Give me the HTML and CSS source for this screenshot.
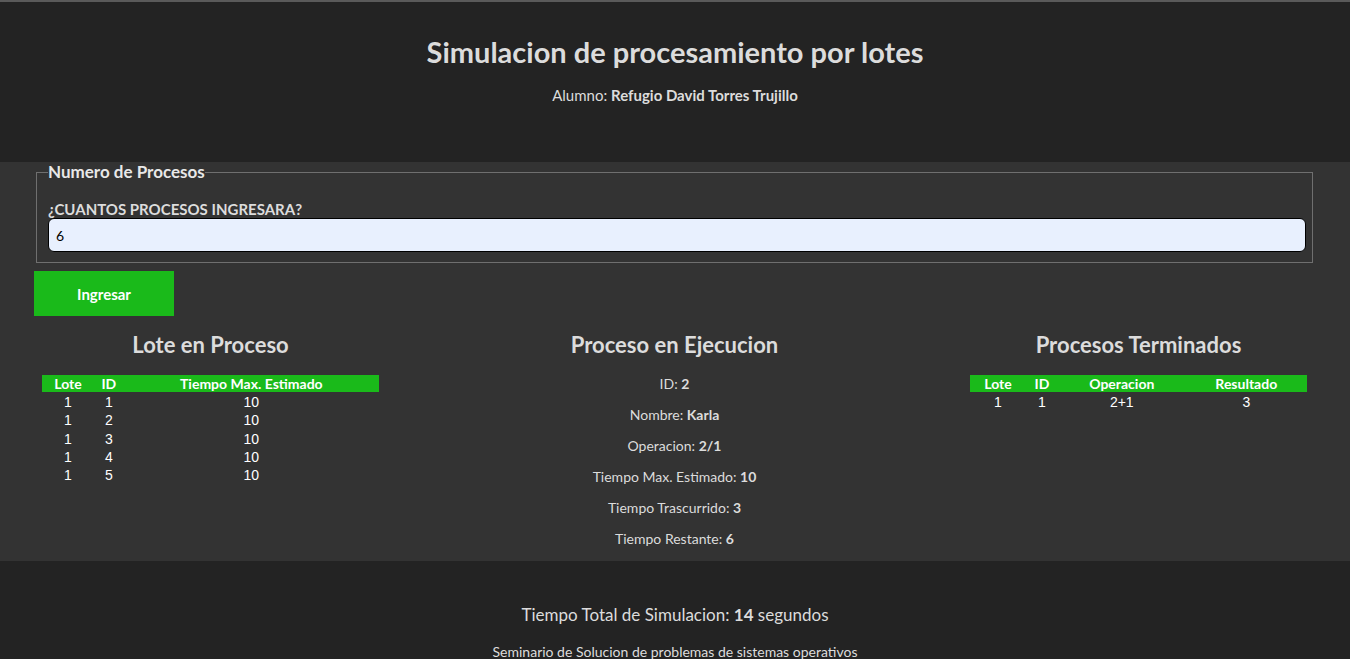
FILE: index.html
```html
<!DOCTYPE html>
<html lang="es">
<head>
    <meta charset="UTF-8">
    <meta name="viewport" content="width=device-width, initial-scale=1.0">
    <title>Procesamiento por lotes</title>
    <link rel="stylesheet" href="styles.css">
</head>
<body>
<header class="top">
    <h1>Simulacion de procesamiento por lotes</h1>
    <p>Alumno: <b>Refugio David Torres Trujillo</b></p>
</header>

<main class="panel">
    <form id="procForm" class="proc-form">
        <fieldset>
            <legend>Numero de Procesos</legend>
            <label for="numProcesos">¿Cuantos procesos ingresara?</label>
            <input type="text" id="numProcesos" value="6">
        </fieldset>
        <button type="button" class="btn">Ingresar</button>
    </form>

    <div class="columns">
        <section class="col">
            <h2>Lote en Proceso</h2>
            <table class="tabla">
                <thead>
                    <tr><th>Lote</th><th>ID</th><th>Tiempo Max. Estimado</th></tr>
                </thead>
                <tbody>
                    <tr><td>1</td><td>1</td><td>10</td></tr>
                    <tr><td>1</td><td>2</td><td>10</td></tr>
                    <tr><td>1</td><td>3</td><td>10</td></tr>
                    <tr><td>1</td><td>4</td><td>10</td></tr>
                    <tr><td>1</td><td>5</td><td>10</td></tr>
                </tbody>
            </table>
        </section>

        <section class="col">
            <h2>Proceso en Ejecucion</h2>
            <p>ID: <b>2</b></p>
            <p>Nombre: <b>Karla</b></p>
            <p>Operacion: <b>2/1</b></p>
            <p>Tiempo Max. Estimado: <b>10</b></p>
            <p>Tiempo Trascurrido: <b>3</b></p>
            <p>Tiempo Restante: <b>6</b></p>
        </section>

        <section class="col">
            <h2>Procesos Terminados</h2>
            <table class="tabla">
                <thead>
                    <tr><th>Lote</th><th>ID</th><th>Operacion</th><th>Resultado</th></tr>
                </thead>
                <tbody>
                    <tr><td>1</td><td>1</td><td>2+1</td><td>3</td></tr>
                </tbody>
            </table>
        </section>
    </div>
</main>

<footer class="bottom">
    <p class="total">Tiempo Total de Simulacion: <b>14</b> segundos</p>
    <p>Seminario de Solucion de problemas de sistemas operativos</p>
</footer>
</body>
</html>
```

FILE: styles.css
```css
body {
    margin: 0;
    font-family: Lato, "Open Sans", sans-serif;
    font-size: 14px;
    color: #dcdcdc;
    background-color: #232323;
    border-top: 2px solid #5a5a5a;
}

.top {
    background-color: #232323;
    text-align: center;
    padding: 33px 0 58px;
}

.top h1 {
    margin: 0 0 17px;
    font-size: 29px;
    line-height: 34px;
}

.top p {
    margin: 0;
    font-size: 15px;
    line-height: 18px;
}

.panel {
    background-color: #333333;
}

.proc-form {
    padding: 0 35px 0 34px;
}

fieldset {
    margin: 0 2px;
    padding: 8px 6px 10px 11px;
    border: 1px solid #6f6f6f;
}

legend {
    font-size: 17px;
    font-weight: bold;
    color: #e8e8e8;
    padding: 0;
    line-height: 20px;
}

label {
    display: block;
    font-size: 15px;
    font-weight: bold;
    text-transform: uppercase;
    margin: 10px 0 0;
    line-height: 18px;
}

input {
    display: block;
    box-sizing: border-box;
    width: 100%;
    height: 34px;
    padding: 0 7px;
    border: 1px solid #000;
    border-radius: 6px;
    background-color: #e8f0fe;
    font-family: Lato, sans-serif;
    font-size: 14px;
    color: #000;
}

.btn {
    display: block;
    width: 140px;
    height: 45px;
    margin-top: 8px;
    border: none;
    background-color: #1aba1a;
    color: #fff;
    font-family: Lato, sans-serif;
    font-size: 15px;
    font-weight: bold;
    cursor: pointer;
}

.columns {
    display: grid;
    grid-template-columns: 337px 337px 337px;
    justify-content: space-between;
    padding: 0 43px 0 42px;
    margin-top: 14px;
}

.col {
    text-align: center;
}

.col h2 {
    margin: 0 0 16px;
    font-size: 22px;
    line-height: 29px;
}

.col p {
    margin: 14px 0;
    line-height: 17px;
}

.col p:first-of-type {
    margin-top: 0;
}

.tabla {
    width: 100%;
    border-collapse: collapse;
    margin-top: 3px;
}

.tabla th {
    background-color: #1aba1a;
    color: #fff;
    font-size: 14px;
    line-height: 17px;
    padding: 0 1px;
}

.tabla td {
    font-family: "Liberation Sans", Arial, sans-serif;
    font-size: 14px;
    color: #fff;
    line-height: 18.3px;
    padding: 0 1px;
    text-align: center;
}

.tabla tbody tr:first-child td {
    padding-top: 1px;
}

.bottom {
    background-color: #232323;
    text-align: center;
    padding-top: 43px;
}

.bottom p {
    margin: 0;
    line-height: 17px;
}

.bottom .total {
    font-size: 17px;
    line-height: 22px;
    margin-bottom: 17px;
}
```
